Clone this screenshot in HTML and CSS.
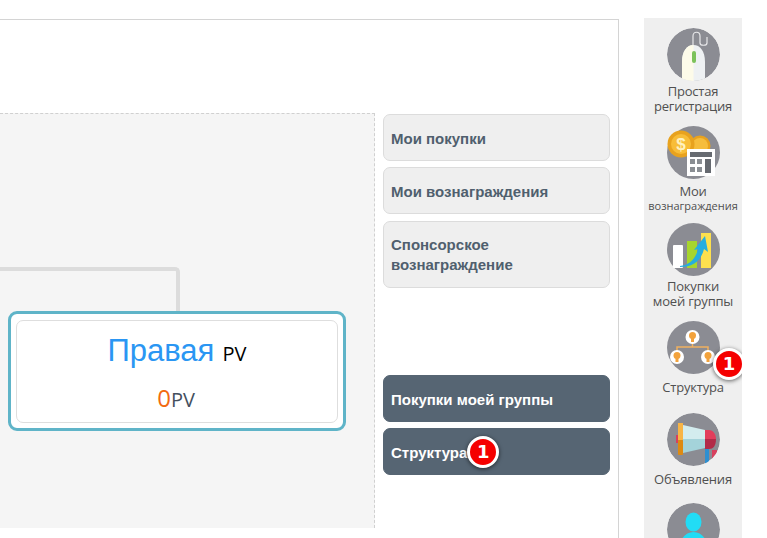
FILE: index.html
```html
<!DOCTYPE html>
<html lang="ru">
<head>
    <meta charset="UTF-8">
    <title>Структура</title>
    <link rel="stylesheet" href="styles.css">
</head>
<body>
    <div class="main">
        <div class="content">
            <div class="tree">
                <div class="connector"></div>
                <div class="node">
                    <div class="node-inner">
                        <div class="node-title"><span class="node-name">Правая</span> <span class="node-unit">PV</span></div>
                        <div class="node-value"><span class="node-zero">0</span>PV</div>
                    </div>
                </div>
            </div>
            <div class="actions">
                <div class="action-group">
                    <a class="action">Мои покупки</a>
                    <a class="action">Мои вознаграждения</a>
                    <a class="action action-tall">Спонсорское вознаграждение</a>
                </div>
                <div class="action-group">
                    <a class="action action-dark">Покупки моей группы</a>
                    <a class="action action-dark">Структура<span class="badge badge-inline">1</span></a>
                </div>
            </div>
        </div>
    </div>

    <div class="sidebar">
        <a class="side-item">
            <svg class="side-icon icon-clip" viewBox="0 0 53 53">
                <circle cx="26.500" cy="26.500" r="26.500" fill="#8b8c93"/>
                <path d="M15 34c0-11 5-17 11.500-17S38 23 38 34v19H15z" fill="#eef1f3"/>
                <path d="M26.500 17C20 17 15 23 15 34v19h11.500z" fill="#fdfbe9"/>
                <rect x="25" y="23" width="4" height="12" rx="2" fill="#7cc25a"/>
                <path d="M26 17V8c0-5 7-5 7 0v7c0 3 7 3 7 0V9" fill="none" stroke="#e8e8ea" stroke-width="1.200"/>
            </svg>
            <span class="side-label">Простая<br>регистрация</span>
        </a>
        <a class="side-item">
            <svg class="side-icon" viewBox="0 0 53 53">
                <circle cx="26.500" cy="26.500" r="26.500" fill="#8b8c93"/>
                <circle cx="33" cy="20" r="10.500" fill="#e8a21e"/>
                <circle cx="33" cy="20" r="8" fill="#f6bd3c"/>
                <circle cx="14" cy="18" r="13.500" fill="#e8a21e"/>
                <circle cx="14" cy="18" r="10" fill="#f8bd38"/>
                <text class="coin-sign" x="14" y="24">$</text>
                <rect x="20" y="23" width="28" height="27" fill="#fff"/>
                <rect x="23" y="26" width="22" height="5" fill="#666a70"/>
                <g fill="#8a8e93">
                    <rect x="23" y="33" width="5" height="5"/>
                    <rect x="30" y="33" width="5" height="5"/>
                    <rect x="23" y="41" width="5" height="5"/>
                    <rect x="30" y="41" width="5" height="5"/>
                </g>
                <rect x="38" y="33" width="6" height="14" fill="#666a70"/>
            </svg>
            <span class="side-label side-label-low">Мои<br><span class="side-small">вознаграждения</span></span>
        </a>
        <a class="side-item">
            <svg class="side-icon" viewBox="0 0 53 53">
                <circle cx="26.500" cy="26.500" r="26.500" fill="#8b8c93"/>
                <rect x="6" y="22" width="10" height="23" rx="1" fill="#fff"/>
                <rect x="20" y="18" width="10" height="27" fill="#a7d52e"/>
                <rect x="34" y="10" width="10" height="35" fill="#fde04e"/>
                <path d="M13 43c10-1 16-8 18-17l-4 1 11-14 3 16-4-3c-3 12-11 18-24 18z" fill="#26aee0"/>
            </svg>
            <span class="side-label">Покупки<br>моей группы</span>
        </a>
        <a class="side-item side-item-mid">
            <svg class="side-icon" viewBox="0 0 53 53">
                <circle cx="26.500" cy="26.500" r="26.500" fill="#8b8c93"/>
                <path d="M10 32v-6h31v6M25.500 20v6" fill="none" stroke="#f0b060" stroke-width="1.500"/>
                <g fill="#fff">
                    <circle cx="25.500" cy="16" r="7"/>
                    <circle cx="10" cy="36" r="7"/>
                    <circle cx="41" cy="36" r="7"/>
                </g>
                <g fill="#f2a23c">
                    <circle cx="25.500" cy="14.500" r="3.500"/>
                    <rect x="24" y="16" width="3" height="5"/>
                    <circle cx="10" cy="34.500" r="3.500"/>
                    <rect x="8.500" y="36" width="3" height="5"/>
                    <circle cx="41" cy="34.500" r="3.500"/>
                    <rect x="39.500" y="36" width="3" height="5"/>
                </g>
            </svg>
            <span class="badge badge-side">1</span>
            <span class="side-label side-label-single">Структура</span>
        </a>
        <a class="side-item side-item-short">
            <svg class="side-icon icon-clip" viewBox="0 0 53 53">
                <circle cx="26.500" cy="26.500" r="26.500" fill="#8b8c93"/>
                <rect x="45" y="37" width="5" height="10" fill="#d8405e"/>
                <rect x="38" y="35" width="4" height="18" fill="#2e8fd0"/>
                <path d="M16 12l22 5v9H16z" fill="#d3ecee"/>
                <path d="M16 26h22v9l-22 5z" fill="#a4d3da"/>
                <path d="M38 17h4c4 0 7 4 7 9H38z" fill="#e23e5c"/>
                <path d="M38 26h11c0 7-3 10-7 10h-4z" fill="#b22a48"/>
                <rect x="9" y="22" width="2" height="8" fill="#d8405e"/>
                <rect x="11" y="10" width="5" height="17" fill="#f8b445"/>
                <rect x="11" y="27" width="5" height="15" rx="1" fill="#dd8a12"/>
            </svg>
            <span class="side-label side-label-single">Объявления</span>
        </a>
        <a class="side-item">
            <svg class="side-icon icon-clip" viewBox="0 0 53 53">
                <circle cx="26.500" cy="26.500" r="26.500" fill="#8b8c93"/>
                <ellipse cx="26.500" cy="19" rx="8" ry="9.500" fill="#22dcf5"/>
                <path d="M12 46c1-11 7-17 14.500-17S40 35 41 46z" fill="#22dcf5"/>
            </svg>
        </a>
    </div>
</body>
</html>
```

FILE: styles.css
```css
* {
    box-sizing: border-box;
}

html,
body {
    height: 538px;
    overflow: hidden;
}

body {
    margin: 0;
    display: flex;
    align-items: flex-start;
    background-color: white;
    font-family: 'Liberation Sans', Arial, sans-serif;
}

.main {
    width: 619px;
    height: 519px;
    margin-top: 19px;
    padding-top: 93px;
    border-top: 1px solid #d4d4d4;
    border-right: 1px solid #d4d4d4;
    flex-shrink: 0;
}

.content {
    display: flex;
    gap: 8px;
}

.tree {
    position: relative;
    width: 375px;
    height: 415px;
    padding: 197px 0 0 8px;
    background-color: #f5f5f5;
    border-top: 1px dashed #d0d0d0;
    border-right: 1px dashed #d0d0d0;
}

.connector {
    position: absolute;
    left: -4px;
    top: 153px;
    width: 184px;
    height: 46px;
    border-top: 4px solid #dcdcdc;
    border-right: 4px solid #dcdcdc;
    border-top-right-radius: 5px;
}

.node {
    position: relative;
    width: 338px;
    height: 120px;
    padding: 6px 5px 5px;
    background-color: white;
    border: 3px solid #5fb4c8;
    border-radius: 9px;
}

.node-inner {
    height: 100%;
    border: 1px solid #dedede;
    border-radius: 7px;
    text-align: center;
    font-family: 'Open Sans', sans-serif;
}

.node-title {
    margin-top: 8px;
    height: 44px;
    line-height: 44px;
    color: black;
    font-size: 20px;
}

.node-name {
    font-family: 'Liberation Sans', Arial, sans-serif;
    font-size: 31px;
    color: #2a96f3;
    margin-right: 3px;
}

.node-value {
    margin-top: 10px;
    padding-right: 2px;
    line-height: 30px;
    color: #444f5e;
    font-size: 20px;
}

.node-zero {
    color: #f26a10;
    font-size: 24px;
}

.actions {
    width: 227px;
    height: 361px;
    margin-top: 1px;
    display: flex;
    flex-direction: column;
    justify-content: space-between;
}

.action-group {
    display: flex;
    flex-direction: column;
    gap: 6px;
}

.action {
    display: flex;
    align-items: center;
    height: 47px;
    padding: 2px 7px 0;
    background-color: #efefef;
    border: 1px solid #dcdcdc;
    border-radius: 7px;
    color: #505f6e;
    font-size: 15px;
    font-weight: bold;
    line-height: 20px;
}

.action-tall {
    height: 67px;
    margin-top: 1px;
    padding-top: 0;
}

.action-dark {
    background-color: #566573;
    border-color: #566573;
    color: white;
}

.badge {
    display: flex;
    align-items: center;
    justify-content: center;
    width: 32px;
    height: 32px;
    background-color: #f50000;
    border: 3px solid white;
    border-radius: 50%;
    box-shadow: 0 1px 4px rgba(0, 0, 0, 0.6);
    color: white;
    font-family: 'DejaVu Sans', sans-serif;
    font-size: 18px;
    font-weight: bold;
}

.badge-inline {
    flex-shrink: 0;
    margin-top: -2px;
}

.badge-side {
    position: absolute;
    left: 69px;
    top: 27px;
}

.sidebar {
    width: 98px;
    height: 520px;
    margin: 18px 0 0 25px;
    padding-top: 10px;
    background-color: #efefef;
    flex-shrink: 0;
    overflow: hidden;
}

.side-item {
    position: relative;
    display: flex;
    flex-direction: column;
    align-items: center;
    height: 97.500px;
    text-align: center;
}

.side-item-mid {
    height: 92px;
}

.side-item-short {
    height: 90px;
}

.side-icon {
    display: block;
    width: 53px;
    height: 53px;
    flex-shrink: 0;
}

.icon-clip {
    border-radius: 50%;
}

.coin-sign {
    fill: #fff2c0;
    font-family: 'Liberation Sans', Arial, sans-serif;
    font-size: 17px;
    font-weight: bold;
    text-anchor: middle;
}

.side-label {
    margin-top: 3px;
    color: #505050;
    font-family: 'Open Sans', sans-serif;
    font-size: 13px;
    line-height: 15px;
    letter-spacing: -0.2px;
    white-space: nowrap;
}

.side-label-low {
    margin-top: 5px;
}

.side-label-single {
    margin-top: 6px;
}

.side-small {
    display: block;
    font-size: 11px;
    line-height: 13px;
    letter-spacing: 0;
}
```
